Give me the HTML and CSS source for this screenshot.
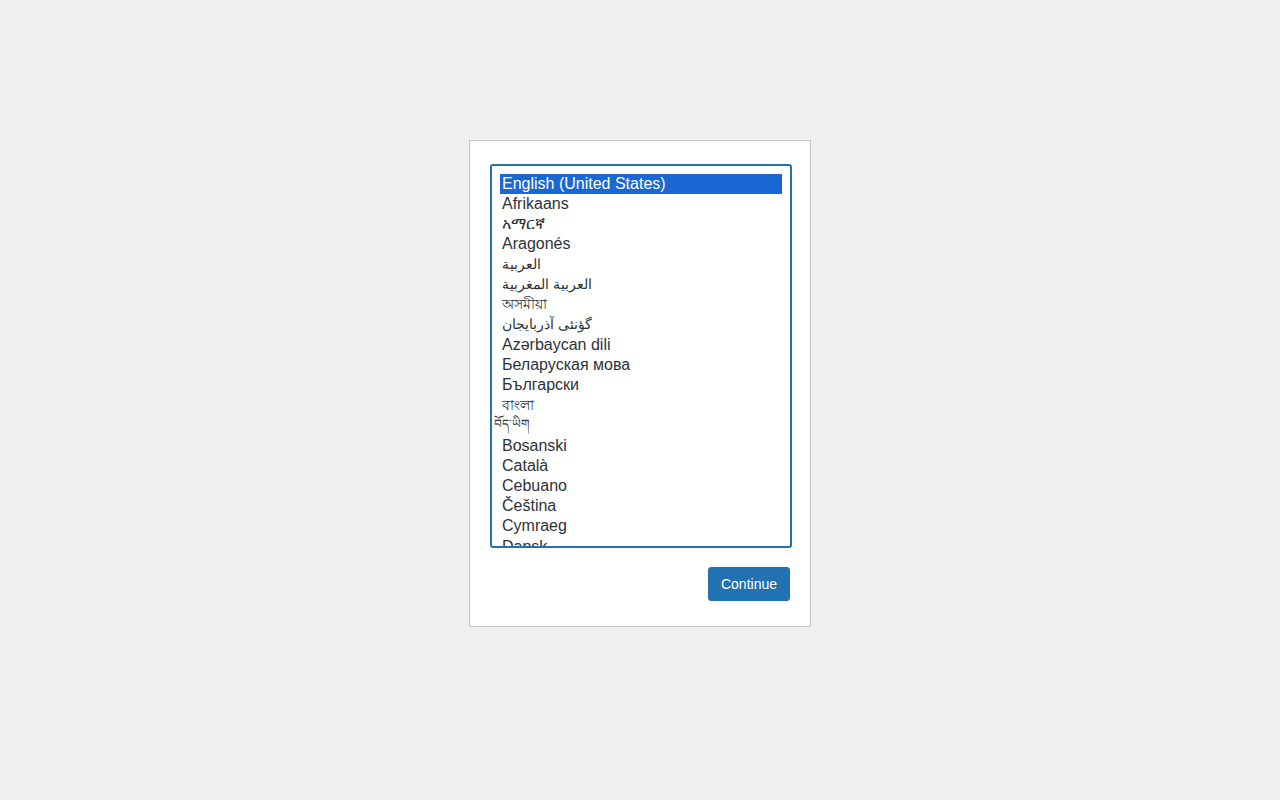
FILE: index.html
```html
<!DOCTYPE html>
<html lang="en">
<head>
<meta charset="utf-8">
<title>WordPress › Setup Configuration File</title>
<link rel="stylesheet" href="styles.css">
</head>
<body class="page">
<main class="card">
  <form class="setup">
    <div class="listbox" role="listbox" aria-label="Select a default language">
      <div class="option selected" role="option">English (United States)</div>
      <div class="option" lang="af">Afrikaans</div>
      <div class="option" lang="am">አማርኛ</div>
      <div class="option" lang="an">Aragonés</div>
      <div class="option" lang="ar">العربية</div>
      <div class="option" lang="ary">العربية المغربية</div>
      <div class="option" lang="as">অসমীয়া</div>
      <div class="option" lang="azb">گؤنئی آذربایجان</div>
      <div class="option" lang="az">Azərbaycan dili</div>
      <div class="option" lang="be">Беларуская мова</div>
      <div class="option" lang="bg">Български</div>
      <div class="option" lang="bn">বাংলা</div>
      <div class="option tibetan" lang="bo">བོད་ཡིག</div>
      <div class="option" lang="bs">Bosanski</div>
      <div class="option" lang="ca">Català</div>
      <div class="option" lang="ceb">Cebuano</div>
      <div class="option" lang="cs">Čeština</div>
      <div class="option" lang="cy">Cymraeg</div>
      <div class="option" lang="da">Dansk</div>
    </div>
    <p class="step">
      <button type="button" class="button">Continue</button>
    </p>
  </form>
</main>
</body>
</html>
```

FILE: styles.css
```css
html {
  background: #f0f0f1;
}

body.page {
  margin: 0;
  padding: 140px 0 25px;
  font-family: "Liberation Sans", Arial, sans-serif;
  color: #2c3338;
}

.card {
  width: 300px;
  margin: 0 auto;
  padding: 23px 20px 25px;
  background: #fff;
  border: 1px solid #c3c4c7;
}

.setup {
  margin: 0;
}

.listbox {
  width: 282px;
  height: 364px;
  padding: 8px;
  border: 2px solid #2271b1;
  border-radius: 3px;
  overflow: hidden;
  font-size: 16px;
  background: #fff;
}

.option {
  height: 20.15px;
  line-height: 19px;
  padding: 0 2px;
  white-space: nowrap;
  color: #2c3338;
  direction: ltr;
  text-align: left;
}

.option[lang="ar"],
.option[lang="ary"],
.option[lang="azb"],
.option[lang="as"],
.option[lang="bn"] {
  font-size: 14px;
}

.option.selected {
  background: #1967d2;
  color: #fff;
}

.option.tibetan {
  font-size: 12px;
  margin-left: -8px;
  line-height: 16px;
}

.step {
  margin: 19px 0 0;
  display: flex;
  justify-content: flex-end;
}

.button {
  height: 34px;
  padding: 0 12px;
  font-family: "Liberation Sans", Arial, sans-serif;
  font-size: 14px;
  color: #fff;
  background: #2271b1;
  border: 1px solid #2271b1;
  border-radius: 3px;
  cursor: pointer;
}
```
